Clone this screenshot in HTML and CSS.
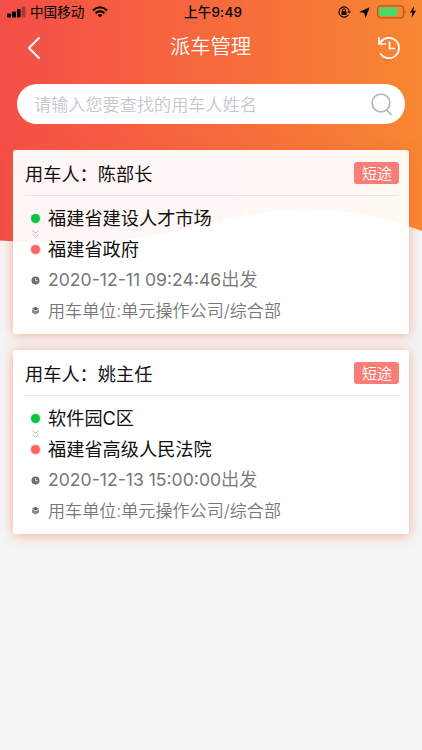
FILE: index.html
```html
<!DOCTYPE html>
<html lang="zh-CN">
<head>
<meta charset="utf-8">
<title>派车管理</title>
<link rel="stylesheet" href="styles.css">
</head>
<body>
<svg class="backdrop" viewBox="0 0 422 250" aria-hidden="true">
  <defs><linearGradient id="warm" x1="0" y1="0" x2="1" y2="0"><stop offset="0" stop-color="#f44e47"/><stop offset=".5" stop-color="#f6693d"/><stop offset="1" stop-color="#f88732"/></linearGradient></defs>
  <path fill="url(#warm)" d="M0 0H422V231C380 216 345 209.500 306 209.500C220 209.500 180 243 70 243Q34 243 0 240.500Z"/>
</svg>
<header class="status">
  <svg class="signal" width="19" height="12" viewBox="0 0 19 12"><rect x="0" y="7.500" width="4" height="4" rx="1"/><rect x="5" y="5.500" width="4" height="6" rx="1"/><rect x="10" y="3" width="3.600" height="8.500" rx="1"/><rect x="14.800" y="0.500" width="3.700" height="11" rx="1" opacity=".3"/></svg>
  <span class="carrier">中国移动</span>
  <svg class="wifi" width="16" height="12" viewBox="0 0 16 12"><g fill="none" stroke="#000" stroke-width="2"><path d="M.8 4.500Q8-2 15.200 4.500"/><path d="M3.500 7.200Q8 3.200 12.500 7.200"/></g><path d="M5.500 9Q8 7 10.500 9L8 11.500Z"/></svg>
  <time class="clock">上午9:49</time>
  <span class="indicators">
    <svg width="13" height="12" viewBox="0 0 13 12"><path d="M10.500 8.700A5.100 5.100 0 1 1 11 4.500" fill="none" stroke="#000" stroke-width="1.100"/><path d="M9.400 5.200H13L11.200 7.600Z"/><rect x="3.500" y="5.200" width="5" height="3.700" rx=".5"/><path d="M4.600 5.400V4.200a1.400 1.400 0 0 1 2.800 0v1.200" fill="none" stroke="#000"/></svg>
    <svg width="11" height="11" viewBox="0 0 11 11"><path d="M10.700.3L6.500 10.900L5.200 5.900L.2 4.900Z"/></svg>
    <svg class="battery" width="30" height="14" viewBox="0 0 30 14"><rect x=".6" y=".8" width="26" height="12" rx="3" fill="none" stroke="#a65a28" stroke-width="1.200"/><rect x="2.300" y="2.500" width="18" height="8.600" rx="1" fill="#4cd964"/><path d="M28.200 4.700Q30 6.800 28.200 8.900Z" fill="#a65a28"/></svg>
    <svg class="bolt" width="6" height="12" viewBox="0 0 6 12"><path d="M4 0L0 6.500H2.500L1.500 12L6 4.700H3.300Z"/></svg>
  </span>
</header>
<nav class="nav">
  <svg class="back" width="14" height="24" viewBox="0 0 14 24"><path d="M12 2L2 12L12 22"/></svg>
  <h1>派车管理</h1>
  <svg class="history" width="24" height="24" viewBox="0 0 24 24"><path d="M4 5.500A10.200 10.200 0 1 1 3.500 17.800"/><path d="M2 1.500V8H8.500M2.500 7.500L6 3.800M12.500 6V12.500H17.500"/></svg>
</nav>
<div class="search">
  <span>请输入您要查找的用车人姓名</span>
  <svg width="22" height="23" viewBox="0 0 22 23"><circle cx="10" cy="10" r="8.900"/><path d="M15.500 17L20 21.500"/></svg>
</div>
<main class="list">
  <article class="card">
    <div class="card-head"><h2>用车人：<span class="person">陈部长</span></h2><span class="tag">短途</span></div>
    <div class="route">
      <div class="row stop"><i class="dot green"></i><span>福建省建设人才市场</span>
        <svg class="chevrons" width="7" height="8" viewBox="0 0 7 8"><path d="M.5.8L3.500 3.200L6.500.8M.5 4.500L3.500 7L6.500 4.500"/></svg></div>
      <div class="row stop"><i class="dot red"></i><span>福建省政府</span></div>
      <div class="row when"><svg width="9" height="9" viewBox="0 0 9 9"><circle cx="4.500" cy="4.500" r="4" fill="#707070"/><path d="M4.500 2.300V4.700H6.600" fill="none" stroke="#fff" stroke-width=".8"/></svg><span><b>2020-12-11 09:24:46</b>出发</span></div>
      <div class="row unit"><svg width="9" height="9" viewBox="0 0 9 9"><path d="M4.500.8L8 2.700L4.500 4.600L1 2.700Z" fill="#666"/><path d="M1 3.300L4.500 5.200L8 3.300V6.500L4.500 8.500L1 6.500Z" fill="#8a8a8a"/></svg><span>用车单位:单元操作公司/综合部</span></div>
    </div>
  </article>
  <article class="card">
    <div class="card-head"><h2>用车人：<span class="person">姚主任</span></h2><span class="tag">短途</span></div>
    <div class="route">
      <div class="row stop"><i class="dot green"></i><span>软件园C区</span>
        <svg class="chevrons" width="7" height="8" viewBox="0 0 7 8"><path d="M.5.8L3.500 3.200L6.500.8M.5 4.500L3.500 7L6.500 4.500"/></svg></div>
      <div class="row stop"><i class="dot red"></i><span>福建省高级人民法院</span></div>
      <div class="row when"><svg width="9" height="9" viewBox="0 0 9 9"><circle cx="4.500" cy="4.500" r="4" fill="#707070"/><path d="M4.500 2.300V4.700H6.600" fill="none" stroke="#fff" stroke-width=".8"/></svg><span><b>2020-12-13 15:00:00</b>出发</span></div>
      <div class="row unit"><svg width="9" height="9" viewBox="0 0 9 9"><path d="M4.500.8L8 2.700L4.500 4.600L1 2.700Z" fill="#666"/><path d="M1 3.300L4.500 5.200L8 3.300V6.500L4.500 8.500L1 6.500Z" fill="#8a8a8a"/></svg><span>用车单位:单元操作公司/综合部</span></div>
    </div>
  </article>
</main>
</body>
</html>
```
FILE: styles.css
```css
* { box-sizing: border-box; }
body {
  margin: 0;
  height: 750px;
  overflow: hidden;
  background: #f5f5f5;
  color: #111;
  font-family: Inter, "Noto Sans CJK SC", sans-serif;
  white-space: nowrap;
}
svg { display: block; flex: none; }
.backdrop { position: absolute; z-index: -1; top: 0; left: 0; width: 422px; height: 250px; }
.status { display: flex; align-items: center; height: 24px; padding: 0 6px 0 7px; color: #000; }
.carrier { width: 55px; margin-left: 4px; font-size: 13.600px; line-height: 24px; }
.wifi { margin-left: 7px; }
.clock { margin-left: 76px; font-size: 13.500px; font-weight: 500; line-height: 24px; letter-spacing: .2px; }
.indicators { display: flex; align-items: center; margin-left: auto; }
.indicators svg + svg { margin-left: 8px; }
.indicators .battery { margin-left: 7px; }
.indicators .bolt { margin-left: 3px; }
.nav { display: flex; align-items: center; justify-content: space-between; height: 46px; padding: 0 21px 0 27px; color: #fff; }
.nav svg { fill: none; stroke: #fff; stroke-width: 2; stroke-linecap: round; stroke-linejoin: round; }
.nav .back { margin-top: 1px; }
.nav .history { stroke-width: 1.700; margin-top: 2px; }
h1 { margin: 0 0 0 3px; font-size: 20.300px; font-weight: 350; line-height: 30px; }
.search { display: flex; align-items: center; justify-content: space-between; height: 40px; margin: 14px 17px 0; padding: 0 12px 0 17px; border-radius: 20px; background: #fff; color: #c6c6cb; font-size: 17.150px; font-weight: 350; }
.search span { margin-top: -2px; }
.search svg { fill: none; stroke: #b7b8be; stroke-width: 1.700; stroke-linecap: round; }
.list { display: flex; flex-direction: column; gap: 16px; margin: 26px 13px 0; }
.card { position: relative; height: 184px; padding: 0 10px 0 12px; border-radius: 3px; background: rgba(255, 255, 255, .95); }
.card::before { content: ""; position: absolute; z-index: -1; inset: 0; border-radius: 3px; box-shadow: 0 1px 12px rgba(240, 100, 65, .5); }
.card-head { display: flex; align-items: center; justify-content: space-between; height: 46px; border-bottom: 1px solid #e9e5e6; }
h2 { display: flex; margin: 2px 0 0; font-size: 18.200px; font-weight: 400; line-height: 28px; }
.tag { width: 45px; height: 22px; margin-top: 1px; padding-left: 1px; border-radius: 3px; background: #fb7d78; color: #fff; font-size: 15px; font-weight: 350; line-height: 23px; text-align: center; }
.route { padding: 7px 0 0 6px; }
.row { display: grid; grid-template-columns: 9px 1fr; column-gap: 8px; align-items: center; height: 31px; position: relative; }
.row > span { margin-top: -3px; }
.stop { font-size: 18.200px; }
.dot { width: 9px; height: 9px; border-radius: 50%; }
.green { background: #05c63c; box-shadow: 0 0 0 1px #d2f4dc; }
.red { background: #ff6464; box-shadow: 0 0 0 1px #ffdada; }
.chevrons { position: absolute; left: 1px; top: 27px; fill: none; stroke: #aaa; stroke-width: .8; }
.when { height: 30px; color: #777; font-size: 18.200px; font-weight: 350; }
.when > span { margin-top: -4px; }
.when b { font-weight: 400; font-size: 17.600px; }
.unit { color: #777; font-size: 17.100px; font-weight: 350; }
```
